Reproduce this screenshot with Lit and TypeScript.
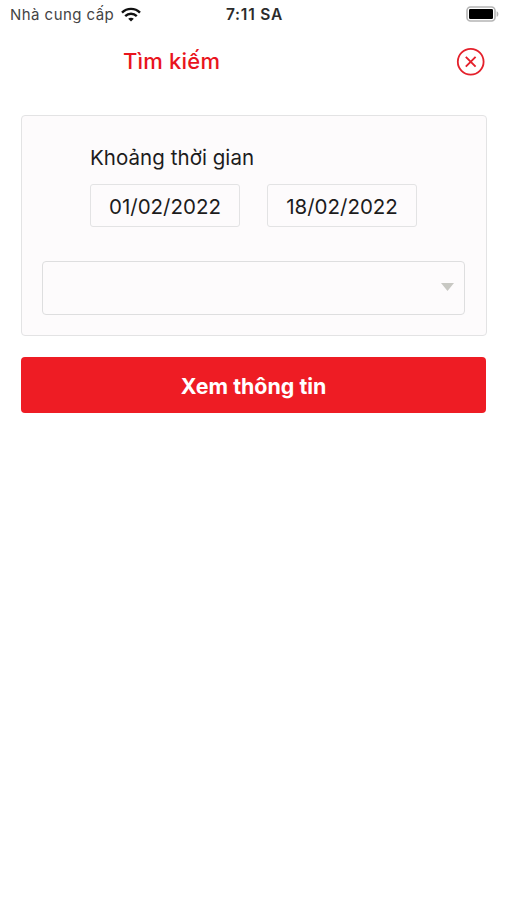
import { LitElement, html, css } from "lit";
import { customElement, state } from "lit/decorators.js";

@customElement("status-bar")
class StatusBar extends LitElement {
  static styles = css`
    :host {
      display: grid;
      grid-template-columns: 1fr auto 1fr;
      align-items: center;
      height: 28px;
      padding: 0 7px 0 10px;
      font-size: 15px;
      color: #444;
    }
    .carrier { display: flex; align-items: center; gap: 7px; }
    .provider { letter-spacing: 0.45px; white-space: nowrap; }
    .clock { color: #2b2b2b; font-size: 15.5px; font-weight: 600; letter-spacing: 0.8px; }
    .battery { justify-self: end; }
    svg { display: block; }
  `;

  render() {
    return html`
      <div class="carrier">
        <span class="provider">Nhà cung cấp</span>
        <svg width="20" height="15" viewBox="0 0 20 15" fill="none" stroke="#111" stroke-width="2.4">
          <path d="M1 5.6C6 .6 14 .6 19 5.6M4.2 9.2C7.5 6 12.5 6 15.8 9.2" />
          <path d="M10 14.4 7.2 11.7C8.7 10.4 11.3 10.4 12.8 11.7Z" fill="#111" stroke="none" />
        </svg>
      </div>
      <span class="clock">7:11 SA</span>
      <svg class="battery" width="33" height="16" viewBox="0 0 33 16">
        <rect x="1" y="1" width="28" height="14" rx="3.5" fill="#fff" stroke="#b5b5b5" stroke-width="1.6" />
        <rect x="3" y="3" width="24" height="10" rx="1.2" fill="#000" />
        <path d="M30.6 5.2C33 6 33 10 30.6 10.8Z" fill="#b5b5b5" />
      </svg>
    `;
  }
}

@customElement("app-root")
class AppRoot extends LitElement {
  @state() private dates = ["01/02/2022", "18/02/2022"];

  static styles = css`
    :host {
      display: block;
      min-height: 900px;
      background: #fff;
      color: #1c1c1c;
      font-family: Inter, "Noto Sans", sans-serif;
    }
    * { box-sizing: border-box; }
    button { font: inherit; border: 0; margin: 0; padding: 0; background: none; }
    svg { display: block; }
    .header {
      display: flex;
      align-items: center;
      justify-content: space-between;
      height: 67px;
      padding: 0 21px 0 123px;
    }
    .title {
      margin: 0;
      padding-bottom: 2px;
      font-size: 22px;
      line-height: 28px;
      font-weight: 500;
      letter-spacing: 0.2px;
      color: #e9141d;
    }
    .card {
      margin: 20px 19px 0 21px;
      height: 221px;
      padding: 28px 21px 20px 20px;
      border: 1px solid #e3e3e4;
      border-radius: 4px;
      background: #fdfbfc;
    }
    .period { padding-left: 48px; }
    .label { font-size: 20.5px; line-height: 28px; letter-spacing: 0.05px; white-space: nowrap; }
    .dates { display: flex; gap: 27px; margin-top: 12px; }
    .date {
      width: 150px;
      height: 43px;
      padding-top: 1px;
      border: 1px solid #e3e3e4;
      border-radius: 3px;
      font-size: 20.5px;
      color: #1c1c1c;
    }
    .select {
      display: flex;
      align-items: center;
      justify-content: flex-end;
      width: 100%;
      height: 54px;
      margin-top: 34px;
      padding: 0 10px 2px 0;
      border: 1px solid #dededf;
      border-radius: 4px;
    }
    .submit {
      display: block;
      width: 465px;
      height: 56px;
      margin: 21px 0 0 21px;
      padding-top: 1px;
      border-radius: 4px;
      background: #ee1c24;
      color: #fff;
      font-size: 21.4px;
      font-weight: 650;
    }
  `;

  render() {
    return html`
      <status-bar></status-bar>
      <header class="header">
        <h1 class="title">Tìm kiếm</h1>
        <button aria-label="Đóng">
          <svg width="29" height="29" viewBox="0 0 29 29" fill="none" stroke="#e4202b">
            <circle cx="14.7" cy="14.7" r="12.9" stroke-width="1.8" />
            <path d="m9.8 9.8 9.8 9.8m0-9.8-9.8 9.8" stroke-width="1.9" />
          </svg>
        </button>
      </header>
      <section class="card">
        <div class="period">
          <div class="label">Khoảng thời gian</div>
          <div class="dates">
            ${this.dates.map((d) => html`<button class="date">${d}</button>`)}
          </div>
        </div>
        <button class="select" aria-label="Chọn">
          <svg width="13" height="8" viewBox="0 0 13 8"><path d="M0 0H13L6.5 8Z" fill="#c8c8c3" /></svg>
        </button>
      </section>
      <button class="submit">Xem thông tin</button>
    `;
  }
}
